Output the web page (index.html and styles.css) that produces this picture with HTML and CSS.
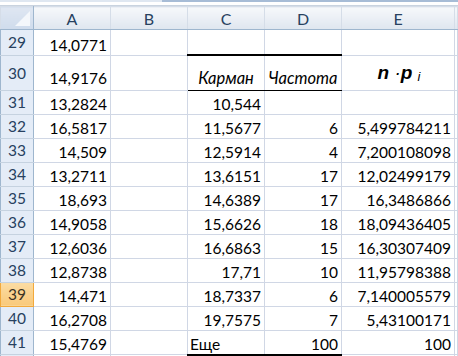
FILE: index.html
```html
<!DOCTYPE html>
<html lang="ru">
<head>
  <meta charset="UTF-8">
  <title>Частота</title>
  <link rel="stylesheet" href="styles.css">
</head>
<body>
  <div class="window">
    <div class="formula-edge"><span class="formula-tab"></span></div>
    <table class="sheet">
      <colgroup>
        <col class="c-num"><col class="c-a"><col class="c-b"><col class="c-c"><col class="c-d"><col class="c-e"><col>
      </colgroup>
      <tr class="head">
        <th class="corner"><span class="tri"></span></th>
        <th>A</th><th>B</th><th>C</th><th>D</th><th>E</th><th></th>
      </tr>
      <tr class="r29"><th>29</th><td>14,0771</td><td></td><td></td><td></td><td></td><td></td></tr>
      <tr class="r30">
        <th>30</th><td>14,9176</td><td></td>
        <td class="cap top-thick bot-thin">Карман</td>
        <td class="cap top-thick bot-thin">Частота</td>
        <td class="np"><b>n</b> ·<b>p</b> <sub>i</sub></td><td></td>
      </tr>
      <tr><th>31</th><td>13,2824</td><td></td><td>10,544</td><td></td><td></td><td></td></tr>
      <tr><th>32</th><td>16,5817</td><td></td><td>11,5677</td><td>6</td><td>5,499784211</td><td></td></tr>
      <tr><th>33</th><td>14,509</td><td></td><td>12,5914</td><td>4</td><td>7,200108098</td><td></td></tr>
      <tr><th>34</th><td>13,2711</td><td></td><td>13,6151</td><td>17</td><td>12,02499179</td><td></td></tr>
      <tr><th>35</th><td>18,693</td><td></td><td>14,6389</td><td>17</td><td>16,3486866</td><td></td></tr>
      <tr><th>36</th><td>14,9058</td><td></td><td>15,6626</td><td>18</td><td>18,09436405</td><td></td></tr>
      <tr><th>37</th><td>12,6036</td><td></td><td>16,6863</td><td>15</td><td>16,30307409</td><td></td></tr>
      <tr><th>38</th><td>12,8738</td><td></td><td>17,71</td><td>10</td><td>11,95798388</td><td></td></tr>
      <tr><th class="sel">39</th><td>14,471</td><td></td><td>18,7337</td><td>6</td><td>7,140005579</td><td></td></tr>
      <tr><th>40</th><td>16,2708</td><td></td><td>19,7575</td><td>7</td><td>5,43100171</td><td></td></tr>
      <tr><th>41</th><td>15,4769</td><td></td><td class="txt bot-thick">Еще</td><td class="bot-thick">100</td><td>100</td><td></td></tr>
      <tr><th></th><td></td><td></td><td></td><td></td><td></td><td></td></tr>
    </table>
  </div>
</body>
</html>
```

FILE: styles.css
```css
body {
  margin: 0;
  background: #ffffff;
  font-family: Lato, "Liberation Sans", sans-serif;
}
.window {
  width: 100vw;
  height: 100vh;
  overflow: hidden;
}

/* strip left over from the formula bar */
.formula-edge {
  position: relative;
  height: 6px;
  border-top: 2px solid #dfe7f1;
  background: #ffffff;
  border-bottom: 1px solid #c9d3df;
  box-sizing: border-box;
}
.formula-tab {
  position: absolute;
  left: 162px;
  right: 0;
  top: -2px;
  height: 2px;
  background: #a7bcd6;
}

.sheet {
  border-collapse: collapse;
  table-layout: fixed;
  width: 458px;
  font-size: 15.5px;
  color: #000000;
}
.c-num { width: 33px; }
.c-a, .c-b, .c-c, .c-d { width: 77px; }
.c-e { width: 113px; }

.sheet td {
  border: 1px solid #d0d7e5;
  height: 23px;
  padding: 0 3px 0 2px;
  text-align: right;
  vertical-align: bottom;
  line-height: 20px;
  white-space: nowrap;
  overflow: hidden;
}
.sheet th {
  border: 1px solid #9eb6ce;
  border-top-color: #c5d2e0;
  border-bottom-color: #c5d2e0;
  background: #e4ecf7;
  color: #27415f;
  font-weight: normal;
  text-align: center;
  vertical-align: middle;
  padding: 0;
  font-size: 15.5px;
}

.head th {
  height: 22px;
  background: linear-gradient(#f6f8fb, #dfe6ef);
  border-color: #d5dde8;
  border-bottom: 1px solid #9eb6ce;
  color: #27415f;
  font-size: 16px;
}
.head th.corner {
  position: relative;
  background: linear-gradient(#dfe7f2, #cfdcec);
  border-right-color: #9eb6ce;
}
.tri {
  position: absolute;
  right: 3px;
  bottom: 3px;
  width: 0;
  height: 0;
  border-left: 15px solid transparent;
  border-bottom: 15px solid #f4f7fb;
}

.r29 td, .r29 th { height: 24px; }
.r30 td, .r30 th { height: 31px; }
.r30 td { padding-bottom: 2px; }

.sheet th.sel {
  background: linear-gradient(#fbdca4, #f9c97a);
  border-color: #f2a93c;
  color: #3b3324;
}

.cap {
  font-style: italic;
  font-size: 16.5px;
  text-align: center !important;
  padding: 0 1px 2px 1px !important;
}
.np {
  text-align: center !important;
  font-family: "Liberation Sans", Arial, sans-serif;
  font-style: italic;
  font-size: 19px;
  padding: 0 0 3px 2px !important;
}
.np b { font-weight: bold; }
.np sub {
  font-size: 13px;
  font-weight: normal;
  vertical-align: -2px;
}
.txt { text-align: left !important; padding-left: 2px !important; }

.sheet td.top-thick { border-top: 2px solid #000000; }
.sheet td.bot-thin { border-bottom: 1px solid #000000; }
.sheet td.bot-thick { border-bottom: 2px solid #000000; }
```
